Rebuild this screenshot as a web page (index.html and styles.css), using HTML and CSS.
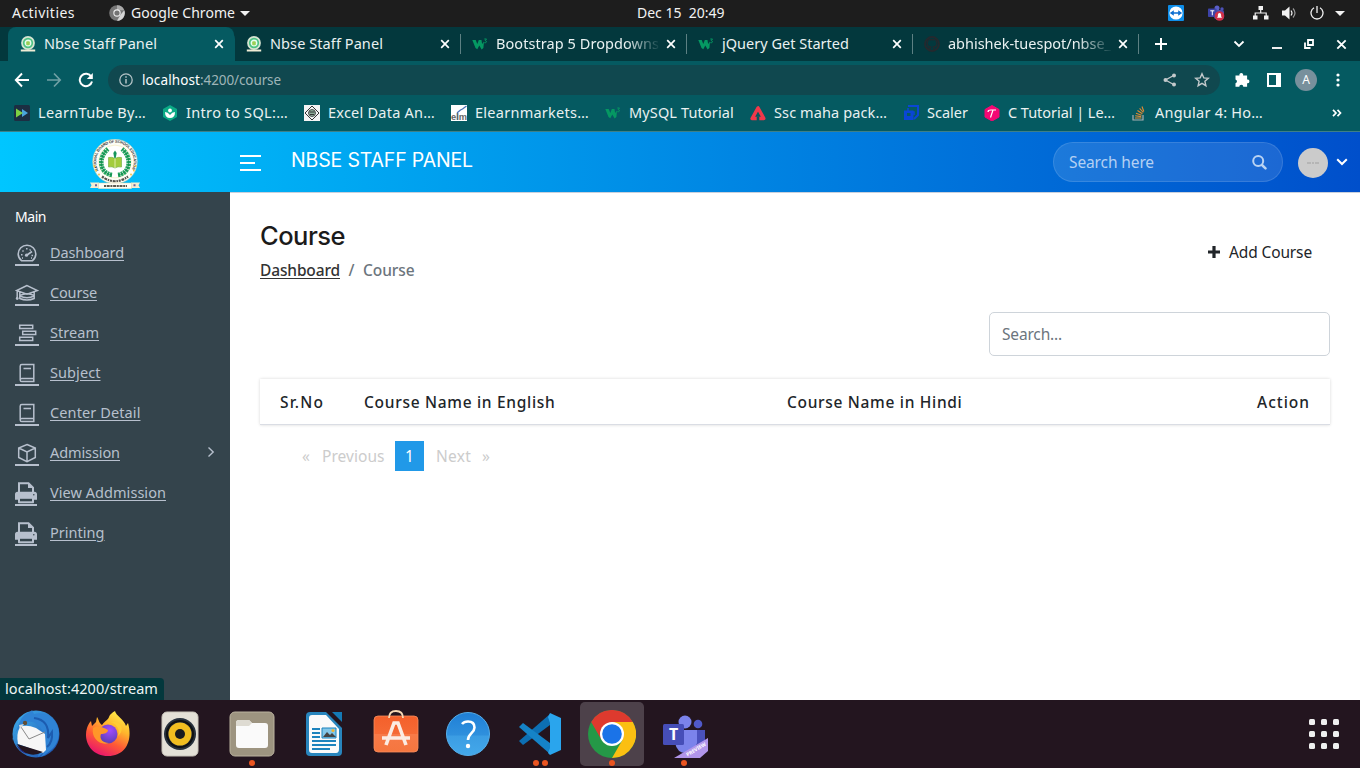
FILE: index.html
```html
<!DOCTYPE html>
<html lang="en">
<head>
<meta charset="utf-8">
<title>Nbse Staff Panel</title>
<link rel="stylesheet" href="styles.css">
</head>
<body>
<svg class="defs" width="0" height="0" aria-hidden="true">
  <defs>
    <linearGradient id="gBlue" x1="0" y1="0" x2="1" y2="1"><stop offset="0" stop-color="#3fb0ee"/><stop offset="1" stop-color="#1b4aa8"/></linearGradient>
    <linearGradient id="gFox" x1=".8" y1="0" x2=".3" y2="1"><stop offset="0" stop-color="#fff24d"/><stop offset=".35" stop-color="#ffb62c"/><stop offset=".65" stop-color="#ff5a35"/><stop offset="1" stop-color="#e8126f"/></linearGradient>
    <radialGradient id="gGlobe" cx=".6" cy=".3" r=".7"><stop offset="0" stop-color="#a24bff"/><stop offset="1" stop-color="#5b3fb5"/></radialGradient>
    <linearGradient id="gHelp" x1="0" y1="0" x2="0" y2="1"><stop offset="0" stop-color="#1f7fd6"/><stop offset=".53" stop-color="#2f90dd"/><stop offset=".54" stop-color="#3b9de3"/><stop offset="1" stop-color="#44a8ea"/></linearGradient>
    <linearGradient id="gBag" x1="0" y1="0" x2="0" y2="1"><stop offset="0" stop-color="#f4602b"/><stop offset=".5" stop-color="#f56a35"/><stop offset=".51" stop-color="#f77a48"/><stop offset="1" stop-color="#f5763f"/></linearGradient>
    <symbol id="sealmini" viewBox="0 0 16 16">
      <circle cx="8" cy="7" r="6.900" fill="#d6e5d2"/><circle cx="8" cy="7" r="4.300" fill="#e6fff0" stroke="#4cc283" stroke-width="1.700"/><rect x="6.200" y="5.300" width="3.600" height="4" rx="1" fill="#9ccf56"/><path d="M.8 13.500h14.400v2H.8z" fill="#f0ecd5"/>
    </symbol>
    <symbol id="w3" viewBox="0 0 16 16">
      <path d="M.3 4h3.400l1.600 4 1.500-4h2.700l.6 4L12 5.500 11.400 12 9.600 13.500 7.300 9.500 5.300 13.300 3.500 12z" fill="#059862"/>
      <path d="M12.300 3h2.200L13.200 4.600c1.800 0 1.800 2.700-.9 2.100" fill="none" stroke="#059862" stroke-width="1"/>
    </symbol>
    <symbol id="x" viewBox="0 0 10 10"><path d="M1.200 1.200l7.600 7.600M8.800 1.200L1.200 8.800" stroke="#fff" stroke-width="1.700"/></symbol>
    <symbol id="book" viewBox="0 0 24 24"><path d="M5.200 19V5.200c0-1 .6-1.600 1.600-1.600h12v17h-12c-1 0-1.600-.8-1.600-1.600 0-1 .7-1.500 1.600-1.500h12M8.500 7.500h7.500" fill="none" stroke="#b7c0cd" stroke-width="1.500"/></symbol>
    <symbol id="printer" viewBox="0 0 22 24"><path d="M4 12V2.200h9.500l4.500 4.500V12" fill="none" stroke="#b7c0cd" stroke-width="2"/><path d="M13 2v5h5z" fill="#b7c0cd"/><path d="M2.500 10.800h17c1.500 0 2.500 1 2.500 2.500v5.500h-3v2.400c0 .7-.4 1-1 1H4c-.6 0-1-.3-1-1v-2.400H0v-5.500c0-1.500 1-2.500 2.500-2.500z" fill="#b7c0cd"/><path d="M5 17.800h12v2.500H5z" fill="#34444c"/><circle cx="18.800" cy="13.800" r=".8" fill="#34444c"/></symbol>
  </defs>
</svg>

<div class="desktop">
  <div class="topbar">
    <div class="topbar-left">
      <span data-w="63">Activities</span>
      <span class="app-menu">
        <svg width="16" height="16" viewBox="0 0 16 16"><circle cx="8" cy="8" r="7.800" fill="#777"/><path d="M8 .2a7.800 7.800 0 0 1 7.300 5H8z" fill="#aaa"/><path d="M15.300 5.200A7.800 7.800 0 0 1 8 15.800l3.500-6z" fill="#d5d5d5"/><circle cx="8" cy="8" r="3.700" fill="#eee"/><circle cx="8" cy="8" r="2.600" fill="#747474"/></svg>
        <span data-w="104">Google Chrome</span>
        <i class="caret"></i>
      </span>
    </div>
    <div class="clock" data-w="87">Dec 15  20:49</div>
    <div class="tray">
      <svg width="16" height="16" viewBox="0 0 16 16"><rect width="16" height="16" rx="1" fill="#0e8ee9"/><circle cx="8" cy="8" r="6.600" fill="#fff"/><path d="M1.800 8l4-2.800v2h4.400v-2l4 2.800-4 2.800v-2H5.800v2z" fill="#0e6fd0"/></svg>
      <svg class="tray-teams" width="17" height="16" viewBox="0 0 17 16"><circle cx="9" cy="3" r="2.500" fill="#5a5fc9"/><circle cx="14" cy="4" r="1.700" fill="#4d52b8"/><rect x="6" y="5" width="10" height="9" rx="2" fill="#4a4fae"/><rect y="3.500" width="8.500" height="8.500" rx=".8" fill="#3d43a8"/><path d="M2.300 5.800h4M4.300 5.800v4.500" stroke="#fff" stroke-width="1"/><circle cx="11.500" cy="11" r="4.800" fill="#cf3049"/><path d="M9 12.800h5l-.8-1.200c0-3-.5-3.600-1.700-3.600s-1.700.6-1.700 3.600zM10.800 13.500h1.500" fill="#fff"/></svg>
      <svg class="tray-net" width="16" height="14" viewBox="0 0 16 14"><path d="M5.500 0h4.500v4H5.500zM0 9.500h4.500V13.500H0zM11 9.500h4.500V13.500H11z" fill="#f2f2f2"/><path d="M7.700 4v3M2.200 10V7h11v3" fill="none" stroke="#f2f2f2" stroke-width="1.200"/></svg>
      <svg class="tray-vol" width="15" height="14" viewBox="0 0 15 14"><path d="M0 4.500h3L7.500.5v13L3 9.500H0z" fill="#f2f2f2"/><path d="M9 4.500q2 2.500 0 5" fill="none" stroke="#f2f2f2" stroke-width="1.200"/><path d="M11 2.500q4 4.500 0 9" fill="none" stroke="#999" stroke-width="1.200"/></svg>
      <svg class="tray-pow" width="14" height="14" viewBox="0 0 14 14"><path d="M4 1.800a6 6 0 1 0 6 0M7 0v7" fill="none" stroke="#f2f2f2" stroke-width="1.300"/></svg>
      <i class="caret"></i>
    </div>
  </div>

  <div class="tabs">
    <div class="tab tab-active"><svg width="16" height="16"><use href="#sealmini"/></svg><div class="tab-title"><span data-w="113">Nbse Staff Panel</span></div><svg width="10" height="10"><use href="#x"/></svg></div>
    <div class="tab"><svg width="16" height="16"><use href="#sealmini"/></svg><div class="tab-title"><span data-w="113">Nbse Staff Panel</span></div><svg width="10" height="10"><use href="#x"/></svg></div>
    <div class="tab tab-sep"><svg width="16" height="16"><use href="#w3"/></svg><div class="tab-title fade"><span data-w="163">Bootstrap 5 Dropdowns</span></div><svg width="10" height="10"><use href="#x"/></svg></div>
    <div class="tab tab-sep"><svg width="16" height="16"><use href="#w3"/></svg><div class="tab-title"><span data-w="127">jQuery Get Started</span></div><svg width="10" height="10"><use href="#x"/></svg></div>
    <div class="tab tab-sep"><svg width="16" height="16" viewBox="0 0 16 16"><path d="M6 15.300c0-1 0-1.800-.1-2.200-2 .4-2.500-1-2.800-1.600M10 15.300v-2.700c0-.8-.2-1.200-.5-1.500 4.500-.5 3.700-5 2.500-6.200.2-.7.200-1.300-.1-2-1 0-1.700.8-2 .9-1.200-.3-2.600-.3-3.800 0-.4-.2-1-.9-2-.9-.3.700-.3 1.300-.1 2-1.200 1.200-2 5.700 2.500 6.200-.3.300-.5.700-.5 1.500" fill="none" stroke="#24292e" stroke-width="1.300"/><circle cx="8" cy="8" r="7" fill="none" stroke="#24292e" stroke-width="1.800"/></svg><div class="tab-title fade"><span data-w="163">abhishek-tuespot/nbse_</span></div><svg width="10" height="10"><use href="#x"/></svg></div>
    <div class="tab-tools">
      <svg width="14" height="14" viewBox="0 0 14 14"><path d="M7 1v12M1 7h12" stroke="#fff" stroke-width="2"/></svg>
      <svg class="win-chev" width="12" height="8" viewBox="0 0 12 8"><path d="M1.500 1.500L6 6l4.500-4.500" fill="none" stroke="#fff" stroke-width="1.800"/></svg>
      <svg class="win-min" width="10" height="10" viewBox="0 0 10 10"><path d="M0 9h10" stroke="#eee" stroke-width="2"/></svg>
      <svg class="win-max" width="10" height="10" viewBox="0 0 10 10"><path d="M4 1h5v5H4zM1 3.500V9h5.500" fill="none" stroke="#fff" stroke-width="1.800"/></svg>
      <svg class="win-close" width="11" height="11"><use href="#x"/></svg>
    </div>
  </div>

  <div class="toolbar">
    <svg width="16" height="16" viewBox="0 0 16 16"><path d="M15 8H2M8 1.500L1.800 8 8 14.500" fill="none" stroke="#fff" stroke-width="1.900"/></svg>
    <svg width="16" height="16" viewBox="0 0 16 16"><path d="M1 8h13M8 1.500L14.200 8 8 14.500" fill="none" stroke="#6fa0a4" stroke-width="1.700"/></svg>
    <svg width="16" height="16" viewBox="0 0 16 16"><path d="M13.300 4.800A6.200 6.200 0 1 0 14 9.500" fill="none" stroke="#fff" stroke-width="2"/><path d="M14.800 1v6H8.800z" fill="#fff"/></svg>
    <div class="omnibox">
      <svg width="14" height="14" viewBox="0 0 14 14"><circle cx="7" cy="7" r="6.200" fill="none" stroke="#b3c3c6" stroke-width="1.300"/><path d="M7 6v4.500M7 3.300v1.500" stroke="#b3c3c6" stroke-width="1.500"/></svg>
      <div class="url"><b data-w="58">localhost</b><span data-w="81">:4200/course</span></div>
      <svg class="share" width="14" height="14" viewBox="0 0 14 14"><path d="M11.500 2L2.500 7l9 5" fill="none" stroke="#c3c9cb" stroke-width="1.300"/><circle cx="11" cy="2.400" r="2" fill="#c3c9cb"/><circle cx="2.500" cy="7" r="2" fill="#c3c9cb"/><circle cx="11" cy="11.600" r="2" fill="#c3c9cb"/></svg>
      <svg width="16" height="16" viewBox="0 0 16 16"><path d="M8 1.800l1.800 4.100 4.500.4-3.400 3 1 4.400L8 11.400l-3.900 2.300 1-4.400-3.400-3 4.500-.4z" fill="none" stroke="#c3c9cb" stroke-width="1.400"/></svg>
    </div>
    <svg class="ext" width="16" height="16" viewBox="0 0 16 16"><path d="M1.500 3.500h4a1.900 1.900 0 1 1 3.600 0h4v4a1.900 1.900 0 1 1 0 3.700v3.600H9.300a2 2 0 0 0-4 0H1.500V11.200a1.900 1.900 0 0 0 0-3.700z" fill="#fff"/></svg>
    <svg class="panel" width="14" height="14" viewBox="0 0 14 14"><path d="M1 1h12v12H1z" fill="none" stroke="#fff" stroke-width="2"/><path d="M9 1h4v12H9z" fill="#fff"/></svg>
    <div class="profile">A</div>
    <svg class="dots" width="4" height="14" viewBox="0 0 4 14"><circle cx="2" cy="2" r="1.600" fill="#fff"/><circle cx="2" cy="7" r="1.600" fill="#fff"/><circle cx="2" cy="12" r="1.600" fill="#fff"/></svg>
  </div>

  <div class="bookmarks">
    <span class="bm"><svg width="16" height="16" viewBox="0 0 16 16"><rect width="16" height="16" rx="1.500" fill="#1c2e42"/><path d="M8 4l6 4-6 4z" fill="#4aa3dc"/><path d="M2 3.500L9 8l-7 4.500z" fill="#7ed043"/></svg><span data-w="108">LearnTube By…</span></span>
    <span class="bm"><svg width="16" height="16" viewBox="0 0 16 16"><path d="M8 0l7 4v8l-7 4-7-4V4z" fill="#0cab86"/><path d="M3 7q3 0 5 3 2-3 5-3 0 6-5 6T3 7z" fill="#fff"/><circle cx="8" cy="5.500" r="1.900" fill="#fff"/></svg><span data-w="102">Intro to SQL:…</span></span>
    <span class="bm"><svg width="16" height="16" viewBox="0 0 16 16"><path fill="#f4f4f4" d="M0 0h16v16H0z"/><path d="M8 1l7 7-7 7-7-7z" fill="none" stroke="#333"/><circle cx="8" cy="8" r="3.500" fill="#8fae9a" stroke="#333" stroke-width=".8"/><path d="M5.500 7h5M6 9.500h4" stroke="#333"/></svg><span data-w="107">Excel Data An…</span></span>
    <span class="bm"><svg width="16" height="16" viewBox="0 0 16 16"><path fill="#fff" d="M0 0h16v16H0z"/><path d="M6.500 15V7M6.500 7.500l3-2.500 2-1 4-3" stroke="#4a72b8" stroke-width="1.300" fill="none"/><text x="0" y="15" class="elm" textLength="16" lengthAdjust="spacingAndGlyphs">elm</text></svg><span data-w="114">Elearnmarkets…</span></span>
    <span class="bm"><svg width="16" height="16"><use href="#w3"/></svg><span data-w="105">MySQL Tutorial</span></span>
    <span class="bm"><svg width="16" height="16" viewBox="0 0 16 16"><path d="M8 3L2.200 13.500h11.600z" fill="none" stroke="#f2384a" stroke-width="3.600" stroke-linejoin="round"/><path d="M6.700 11.500h2.600v4.500H6.700z" fill="#055a61"/></svg><span data-w="113">Ssc maha pack…</span></span>
    <span class="bm"><svg width="16" height="16" viewBox="0 0 16 16"><path d="M5 1h10v9l-4 4" fill="none" stroke="#0a46d6" stroke-width="2"/><path d="M1 5.500h9.500V15H1z" fill="#0a46d6"/><path d="M5 3v4h6v3" fill="none" stroke="#0a46d6" stroke-width="1.500"/><path d="M4 8h3.500v3H4z" fill="#075b62"/></svg><span data-w="41">Scaler</span></span>
    <span class="bm"><svg width="16" height="16" viewBox="0 0 16 16"><path d="M8 .5l7 4v7.500l-7 4-7-4V4.500z" fill="#f40874" stroke="#f40874" stroke-linejoin="round"/><path d="M4 7q0-2 3-2h5M9 5Q8 8 6.500 12.500" fill="none" stroke="#fff" stroke-width="1.200"/></svg><span data-w="107">C Tutorial | Le…</span></span>
    <span class="bm"><svg width="16" height="16" viewBox="0 0 16 16"><path d="M2 10v5h10v-5" fill="none" stroke="#a9b0b3" stroke-width="1.200"/><path d="M4 13h6.500M4.200 10.800l6 .8M5 8.200l5.600 2M6.500 5.500l4.900 3.200M8.600 3.300l3.700 4.200M11 1.500l1.800 5" stroke="#e08a34" stroke-width="1.100"/></svg><span data-w="108">Angular 4: Ho…</span></span>
    <svg class="more" width="10" height="8" viewBox="0 0 10 8"><path d="M1 .8L4 4 1 7.200M5.500.8l3 3.200-3 3.200" fill="none" stroke="#fff" stroke-width="1.700"/></svg>
  </div>

  <div class="page">
    <header class="header">
      <div class="brand"><svg width="50" height="50" viewBox="0 0 50 50">
        <circle cx="25" cy="22.500" r="22.300" fill="#fdfdf6" stroke="#b9cfae" stroke-width=".6"/>
        <path id="ringTop" d="M8.500 31.500A18.800 18.800 0 1 1 41.500 31.500" fill="none"/>
        <text class="ring-text"><textPath href="#ringTop" textLength="76">NATIONAL BOARD OF SCHOOL EDUCATION</textPath></text>
        <path d="M12 37.500Q25 47 38 37.500" fill="none" stroke="#55534c" stroke-width="2.200" stroke-dasharray="2 .8 3 .8 1.500 .8"/>
        <circle cx="25" cy="22.500" r="16.400" fill="#fff" stroke="#efe3a4" stroke-width=".5"/>
        <path d="M22 36C9 34 8 18 18 10M28 36c13-2 14-18 4-26" fill="none" stroke="#20a45e" stroke-width="4.600" stroke-dasharray="2.200 .7"/>
        <path d="M22 36C9 34 8 18 18 10M28 36c13-2 14-18 4-26" fill="none" stroke="#128047" stroke-width=".8"/>
        <path d="M18.500 18.500q3.500-.8 6.500 1 3-1.800 6.500-1V28q-3.500-.8-6.500 1-3-1.800-6.500-1z" fill="#a3cc3c" stroke="#6cab3a" stroke-width=".6"/>
        <path d="M25 19.500V29" stroke="#eef5c8" stroke-width=".8"/>
        <path d="M25 11.500l1.700 2.500-1 5h-1.400l-1-5z" fill="#16955a"/>
        <g fill="#f2bd3a"><circle cx="4.500" cy="27" r=".9"/><circle cx="6.200" cy="31.500" r=".9"/><circle cx="9" cy="35.500" r=".9"/><circle cx="45.500" cy="27" r=".9"/><circle cx="43.800" cy="31.500" r=".9"/><circle cx="41" cy="35.500" r=".9"/></g>
        <path d="M0 43.500h9v5.500H0l1.500-2.700zM50 43.500h-9v5.500h9l-1.500-2.700z" fill="#f3ecd0"/>
        <path d="M8.500 44h33v5.700h-33z" fill="#fffef6" stroke="#d8cf9f" stroke-width=".5"/>
        <path d="M14 47h23" stroke="#5c5a50" stroke-width="1.900" stroke-dasharray="2 .7 3 .7"/>
        <path d="M5 46.200h2M43.500 46.200h2" stroke="#6b62a0" stroke-width="2"/>
      </svg></div>
      <div class="burger"><i></i><i></i><i></i></div>
      <h1 class="site-name"><span data-w="182">NBSE STAFF PANEL</span></h1>
      <div class="head-search"><span data-w="85">Search here</span><svg width="16" height="16" viewBox="0 0 16 16"><circle cx="7.200" cy="7" r="5" fill="none" stroke="#b9d3f3" stroke-width="2"/><path d="M11 11l3.500 3.300" stroke="#b9d3f3" stroke-width="2.500" stroke-linecap="round"/></svg></div>
      <div class="avatar"><i></i></div>
      <svg width="12" height="8" viewBox="0 0 12 8"><path d="M1.200 1.200L6 6l4.800-4.800" fill="none" stroke="#fff" stroke-width="2"/></svg>
    </header>
    <div class="body">
      <nav class="sidebar">
        <div class="menu-title"><span data-w="31">Main</span></div>
        <a class="item"><span class="ico"><svg width="24" height="24" viewBox="0 0 24 24"><path d="M6.500 19.700C4 17.500 3.200 15.300 3.200 13a8.800 8.800 0 0 1 17.600 0c0 2.300-.8 4.500-3.300 6.700z" fill="none" stroke="#b7c0cd" stroke-width="1.600"/><path d="M12 14l5-3.500" stroke="#b7c0cd" stroke-width="1.700"/><circle cx="11.500" cy="14.200" r="1.600" fill="#b7c0cd"/><path d="M6 13.700h1.500M16.500 14.500H18M7.500 9.500l1 1M11.800 7v1.500M15.500 8.500l-.7 1M7 17h1M16 17h1" stroke="#b7c0cd" stroke-width="1.500"/></svg></span><span class="label" data-w="74">Dashboard</span></a>
        <a class="item"><span class="ico"><svg width="24" height="24" viewBox="0 0 24 24"><path d="M12 4.500L1.500 9.500 12 13.200l10.500-3.700zM4.800 11v6.500q7.200 3 14.400 0V11M4.800 14.500q7.200-3.300 14.400 0M4.800 15q7.200 3.500 14.400 0M2.200 10v7" fill="none" stroke="#b7c0cd" stroke-width="1.500"/><circle cx="2.200" cy="17.500" r="1.400" fill="#b7c0cd"/></svg></span><span class="label" data-w="47">Course</span></a>
        <a class="item"><span class="ico"><svg width="24" height="24" viewBox="0 0 24 24"><path d="M4.700 4.200h13v3.300h-13zM7.700 10.300h13v3.300h-13zM4.700 16.300h13v3.300h-13z" fill="none" stroke="#b7c0cd" stroke-width="1.500"/></svg></span><span class="label" data-w="49">Stream</span></a>
        <a class="item"><span class="ico"><svg width="24" height="24"><use href="#book"/></svg></span><span class="label" data-w="50.500">Subject</span></a>
        <a class="item"><span class="ico"><svg width="24" height="24"><use href="#book"/></svg></span><span class="label" data-w="90.500">Center Detail</span></a>
        <a class="item"><span class="ico"><svg width="24" height="24" viewBox="0 0 24 24"><path d="M12 3.500L20.300 7v9.500L12 20.700 3.700 16.500V7zM3.700 7L12 11l8.300-4M12 11v9.500" fill="none" stroke="#b7c0cd" stroke-width="1.500"/></svg></span><span class="label" data-w="70">Admission</span><svg class="arrow" width="8" height="12" viewBox="0 0 8 12"><path d="M1.500 1.500L6.200 6l-4.700 4.500" fill="none" stroke="#b7c0cd" stroke-width="1.400"/></svg></a>
        <a class="item"><span class="ico ico-print"><svg width="22" height="24"><use href="#printer"/></svg></span><span class="label" data-w="116">View Addmission</span></a>
        <a class="item"><span class="ico ico-print"><svg width="22" height="24"><use href="#printer"/></svg></span><span class="label" data-w="54.500">Printing</span></a>
      </nav>
      <main class="content">
        <div class="page-head">
          <div>
            <h2 class="page-title"><span data-w="85">Course</span></h2>
            <div class="crumbs"><a data-w="80">Dashboard</a><span class="slash">/</span><span data-w="51.500">Course</span></div>
          </div>
          <div class="add"><svg width="14" height="14" viewBox="0 0 14 14"><path d="M7 1v12M1 7h12" stroke="#212529" stroke-width="3.200"/></svg><span data-w="83">Add Course</span></div>
        </div>
        <div class="search-row"><div class="search"><span data-w="60">Search...</span></div></div>
        <div class="table-head">
          <span data-w="44">Sr.No</span><span data-w="191.500">Course Name in English</span><span data-w="175.500">Course Name in Hindi</span><span data-w="53">Action</span>
        </div>
        <div class="pager"><span data-w="8">«</span><span class="prev" data-w="62.500">Previous</span><b>1</b><span data-w="35">Next</span><span class="last" data-w="8">»</span></div>
      </main>
    </div>
    <div class="status"><span data-w="153">localhost:4200/stream</span></div>
  </div>

  <div class="dock">
    <div class="app"><svg width="48" height="48" viewBox="0 0 48 48"><circle cx="24" cy="24" r="23.500" fill="url(#gBlue)"/><path d="M9 9C14 2 18 3 20 0l2 4c12-3 23 4 25 18 0 12-6 18-18 25l4-6-7 6 2-8c6-8 5-20-5-26-6-3-12 0-14 4-6 4-8 10-10 16z" fill="#2f83d5"/><path d="M22 8q16 2 14 20l4-6q1 10-5 15" fill="none" stroke="#1c5cb0" stroke-width="2"/><path d="M8 17q6-3 16 1l9 6 1 16-3 3L6 34q-2-10 2-17z" fill="#f6f6f6"/><path d="M9 17l8 12 16-7" fill="none" stroke="#888" stroke-width="1"/><path d="M5 34l26 8q-8 4-14 2-7-1-12-10z" fill="#23151f"/><path d="M4 34q6 8 12 10-8-1-12-10z" fill="#29176f"/><circle cx="13" cy="13" r="2.200" fill="#634e35"/><path d="M12 14l-4 5-1-4z" fill="#ddd"/></svg></div>
    <div class="app"><svg width="48" height="48" viewBox="0 0 48 48"><path d="M31 1c1 5 9 8 11 15l2-3c5 17-2 33-20 33C7 46-1 31 3 18c1-3 2-5 4-7l1 5 4-4 1-5c2 3 2 6 5 8 4-5 6-5 7-8 1-3 3-4 6-6z" fill="url(#gFox)"/><circle cx="24" cy="24" r="9.500" fill="url(#gGlobe)"/><path d="M9 18c5-3 9-1 15 2 0 3-4 4-7 4-2 5 2 9 8 9-9 3-18-5-16-15z" fill="#ff9629"/><path d="M27 12c7 3 9 8 7 14 7-6 4-15-7-14z" fill="#ffcf35" opacity=".8"/></svg></div>
    <div class="app"><svg width="48" height="48" viewBox="0 0 48 48"><rect x="6" y="2" width="36" height="44" rx="5" fill="#e4e0d7" stroke="#c9c4ba"/><circle cx="24" cy="24" r="16" fill="#27303c"/><circle cx="24" cy="24" r="13" fill="none" stroke="#101114" stroke-width="2"/><circle cx="24" cy="24" r="11.500" fill="#f1bd20"/><circle cx="24" cy="24" r="5" fill="#191b1f"/></svg></div>
    <div class="app"><svg width="48" height="48" viewBox="0 0 48 48"><rect x="2" y="2" width="44" height="44" rx="5" fill="#9d9480" stroke="#bbb39f"/><path d="M8 13q0-3 3-3h10l3 3h13q3 0 3 3v19q0 3-3 3H11q-3 0-3-3z" fill="#fafafa"/><path d="M8 16v-3q0-3 3-3h10l3 3-3 3z" fill="#dedbd2"/></svg><i class="run"></i></div>
    <div class="app"><svg width="48" height="48" viewBox="0 0 48 48"><path d="M10 2h16l16 16v24q0 4-4 4H10q-4 0-4-4V6q0-4 4-4z" fill="#2885bd"/><path d="M32 2h10v10z" fill="#1579b4"/><path d="M12 5h14l13 14v20q0 4-3 4H12q-3 0-3-3V8q0-3 3-3z" fill="#fafafa"/><path d="M12 19h8M12 23h8M12 27h8M12 31h24M12 35h24M12 39h18" stroke="#1d83bd" stroke-width="2"/><path d="M22 18h14v10H22z" fill="#83c7e9" stroke="#1d83bd"/><path d="M23 27l4-5 3 3 2-2 4 4z" fill="#444"/><circle cx="33" cy="20.500" r="1.500" fill="#f2b430"/></svg></div>
    <div class="app"><svg width="48" height="48" viewBox="0 0 48 48"><rect x="2" y="6" width="44" height="36" rx="4" fill="url(#gBag)" stroke="#f88e5e" stroke-width=".8"/><path d="M17 8q0-7 7-7t7 7" fill="none" stroke="#f6d9b5" stroke-width="1.800"/><path d="M14 35l8-22h4l8 22M10 28h28" fill="none" stroke="#fbece3" stroke-width="3.600"/></svg></div>
    <div class="app"><svg width="48" height="48" viewBox="0 0 48 48"><circle cx="24" cy="24" r="21.500" fill="url(#gHelp)" stroke="#55aeea"/><path d="M18 14q2-2.500 6-2.500 6.500 0 6.500 6c0 5.500-6.500 6-6.500 12.500" fill="none" stroke="#fff" stroke-width="2.600"/><circle cx="24" cy="36" r="2.200" fill="#fff"/></svg></div>
    <div class="app"><svg width="48" height="48" viewBox="0 0 48 48"><path d="M3 31l4 4 27-20V4z" fill="#0d6fb3"/><path d="M3 17l4-4 27 20V44z" fill="#1583c7"/><path d="M34 3l11 5v32l-11 5-2-2 2-5V13l-2-6z" fill="#2aa5ed"/></svg><i class="run"></i><i class="run"></i></div>
    <div class="app app-on"><svg width="48" height="48" viewBox="0 0 48 48"><circle cx="24" cy="24" r="24" fill="#259847"/><path d="M3.200 12A24 24 0 0 1 44.800 12H24L13.600 30z" fill="#de3a2e"/><path d="M44.800 12A24 24 0 0 1 24 48l10.400-18L24 12z" fill="#fbbf12"/><circle cx="24" cy="24" r="12" fill="#fff"/><circle cx="24" cy="24" r="9.800" fill="#1a73e8"/></svg><i class="run"></i></div>
    <div class="app"><svg width="48" height="48" viewBox="0 0 48 48"><circle cx="25" cy="12" r="6.500" fill="#7b83eb"/><circle cx="38" cy="14" r="4.300" fill="#5059c9"/><path d="M34 20h11v18h-8z" fill="#4a51bd"/><path d="M15 20h22v13q-2 10-11 10t-11-10z" fill="#7b83eb"/><rect x="3" y="14" width="21" height="21" rx="1.500" fill="#464eb8"/><text x="9" y="30" class="teams-t">T</text><path d="M14 48l34-20v13l-8 7z" fill="#b195ea"/><text class="preview" transform="translate(27.500 46.500) rotate(-31)" textLength="22">PREVIEW</text></svg><i class="run"></i></div>
    <div class="grid"><i></i><i></i><i></i><i></i><i></i><i></i><i></i><i></i><i></i></div>
  </div>
</div>
<script src="fit.js"></script>
</body>
</html>
```

FILE: styles.css
```css
* { box-sizing: border-box; }
body { margin: 0; font-family: "Noto Sans", "Open Sans", sans-serif; font-size: 14.5px; }
svg { display: block; flex: none; }
.defs { position: absolute; }
[data-w] { display: inline-block; white-space: pre; flex: none; }
.desktop { width: 1360px; height: 768px; display: flex; flex-direction: column; overflow: hidden; }

/* system bar */
.topbar { height: 27px; flex: none; background: #1d1d1d; color: #f2f2f2; display: grid; grid-template-columns: 637px 87px 1fr; align-items: center; font-size: 14px; line-height: 26px; padding-bottom: 1px; }
.topbar-left { display: flex; padding-left: 12px; gap: 34px; }
.app-menu { display: flex; align-items: center; }
.app-menu svg { margin-right: 6px; }
.caret { border: 5px solid transparent; border-top-color: #f2f2f2; border-bottom: 0; }
.app-menu .caret { margin-left: 5px; }
.tray { display: flex; align-items: center; padding-left: 444px; }
.tray-teams { margin-left: 24px; }
.tray-net { margin-left: 28px; }
.tray-vol { margin-left: 13px; }
.tray-pow { margin-left: 13px; }
.tray .caret { margin-left: 11px; }

/* browser chrome */
.tabs { height: 34px; flex: none; display: flex; background: #03383d; color: #e9f1f1; padding-left: 8px; }
.tab { width: 226px; display: flex; align-items: center; padding: 0 10px 0 12px; position: relative; }
.tab-active { background: #055a61; border-radius: 8px 8px 0 0; box-shadow: 1px 4px 0 #055a61; }
.tab-sep::before { content: ""; position: absolute; left: 0; top: 7px; width: 1px; height: 20px; background: #5d8083; }
.tab-title { width: 164px; margin: 0 7px 0 8px; line-height: 32px; height: 34px; }
.fade { -webkit-mask-image: linear-gradient(to right, #000 130px, transparent 165px); mask-image: linear-gradient(to right, #000 130px, transparent 165px); }
.tab-tools { flex: 1; display: flex; align-items: center; padding-left: 16px; position: relative; }
.tab-tools::before { content: ""; position: absolute; left: 0; top: 7px; width: 1px; height: 20px; background: #5d8083; }
.win-chev { margin-left: 65px; }
.win-min { margin-left: 27px; }
.win-max { margin-left: 22px; }
.win-close { margin-left: 22px; }
.toolbar { height: 37px; flex: none; background: #055a61; display: flex; align-items: center; padding: 1px 0 0 14px; gap: 16px; }
.omnibox { width: 1112px; height: 30px; margin-left: -2px; border-radius: 15px; background: #10484f; display: flex; align-items: center; padding: 0 10px 0 11px; }
.url { flex: 1; margin-left: 9px; color: #9fb5b8; font-size: 13.500px; line-height: 28px; display: flex; }
.url b { font-weight: 400; color: #fff; }
.share { margin-right: 17px; }
.ext { margin-left: -2px; }
.panel { margin-left: 1px; }
.profile { width: 22px; height: 22px; margin-left: -2px; border-radius: 50%; background: #78909c; color: #fff; font-size: 12px; line-height: 22px; text-align: center; }
.dots { margin-left: 3px; }
.bookmarks { height: 33px; flex: none; background: #055a61; color: #e9f1f1; display: flex; align-items: center; gap: 16px; padding: 0 18px 3px 14px; line-height: 28px; }
.bm { display: flex; align-items: center; gap: 8px; }
.bm > span { padding-bottom: 2px; }
.elm { font: bold 9px "Liberation Sans", sans-serif; fill: #666; }
.more { margin-left: auto; }

/* web page */
.page { height: 569px; flex: none; position: relative; border-top: 1px solid #3f7f86; background: #fff; color: #212529; }
.header { height: 60px; background: linear-gradient(to right, #00c6ff, #004fcb); display: flex; align-items: center; padding-right: 12px; }
.brand { width: 230px; display: flex; justify-content: center; padding-top: 4px; }
.ring-text { font: bold 3.800px "Liberation Sans", sans-serif; fill: #333; }
.burger { width: 21px; margin: 2px 0 0 10px; display: grid; gap: 5px; }
.burger i { height: 2px; background: #fff; }
.burger i:nth-child(2) { width: 15px; }
.site-name { margin: 0 0 0 30px; flex: 1; font: 400 19.500px/24px Inter, sans-serif; color: #fff; padding-bottom: 4px; }
.head-search { width: 230px; height: 40px; border-radius: 20px; border: 1px solid rgba(255,255,255,.12); background: rgba(255,255,255,.11); display: flex; justify-content: space-between; align-items: center; padding: 0 15px; color: #b4d0f3; font-size: 15.500px; }
.avatar { width: 30px; height: 30px; margin: 2px 8px 0 15px; border-radius: 50%; background: #cbcbcb; display: grid; place-items: center; }
.avatar i { width: 12px; height: 2px; background: linear-gradient(to right, #b5b5b5 4px, transparent 4px 5px, #b5b5b5 5px 7px, transparent 7px 8px, #b5b5b5 8px); }
.body { display: flex; height: 508px; }
.sidebar { width: 230px; background: #34444c; padding: 10px 15px; color: #b7c0cd; }
.menu-title { height: 30px; line-height: 29px; color: #fff; font-size: 14px; }
.item { height: 40px; display: flex; align-items: center; }
.ico { width: 24px; height: 28px; margin-right: 11px; border-bottom: 2px solid #b7c0cd; padding-top: 3px; }
.ico svg { margin-bottom: -1px; }
.ico-print { width: 22px; margin-right: 13px; }
.label { text-decoration: underline; text-underline-offset: 2px; line-height: 40px; }
.arrow { margin-left: auto; }
.content { flex: 1; padding: 29px 30px 0; border-top: 1px solid #c9d0dc; }
.page-head { display: flex; justify-content: space-between; height: 90px; }
.page-title { margin: 0; font: 500 25.500px/28px Inter, sans-serif; color: #1b1b1b; }
.crumbs { margin-top: 8px; display: flex; font-weight: 500; font-size: 15.500px; line-height: 24px; color: #6c757d; }
.crumbs a { color: #333; text-decoration: underline; text-underline-offset: 2px; }
.slash { width: 23px; text-align: center; }
.add { display: flex; align-items: center; gap: 8px; height: 60px; margin-right: 18px; font-size: 15.500px; }
.search-row { display: flex; justify-content: flex-end; }
.search { width: 341px; height: 44px; border: 1px solid #ced4da; border-radius: 5px; padding: 0 12px; line-height: 42px; font-size: 15.500px; color: #6c757d; }
.table-head { height: 46px; margin-top: 23px; display: grid; grid-template-columns: 84px 423px 1fr auto; justify-items: start; padding: 0 20px; line-height: 46px; font-weight: 500; font-size: 15.500px; border-bottom: 1px solid #dadde4; box-shadow: 0 0 3px rgba(0,0,0,.16); }
.pager { display: flex; align-items: center; margin-top: 16px; padding-left: 42px; height: 30px; color: #ccc; font-size: 15.500px; line-height: 30px; }
.prev { margin-left: 12px; }
.pager b { width: 29px; margin: 0 12px 0 10.500px; background: #2199e8; color: #fff; font-weight: 400; text-align: center; }
.last { margin-left: 11px; }
.status { position: absolute; left: 0; bottom: 0; width: 164px; height: 22px; padding-left: 5px; border-radius: 0 4px 0 0; background: #03383d; color: #eef5f5; line-height: 21px; }

/* dock */
.dock { height: 68px; flex: none; background: #23151f; display: flex; align-items: center; gap: 8px; padding: 0 21px 0 4px; }
.app { width: 64px; height: 64px; border-radius: 5px; display: flex; flex-wrap: wrap; justify-content: center; align-content: flex-start; gap: 2px 3px; padding: 8px 6px 0; }
.app svg { margin: 0 2px; }
.app-on { background: #4d414a; }
.run { width: 6px; height: 6px; border-radius: 50%; background: #ea5420; }
.teams-t { font: bold 16px "Noto Sans", sans-serif; fill: #fff; }
.preview { font: bold 5px "Noto Sans", sans-serif; fill: #fff; }
.grid { margin-left: auto; display: grid; grid-template-columns: repeat(3, 6px); gap: 6px; }
.grid i { height: 6px; border-radius: 1.500px; background: #efefef; }
```

FILE: fit.js
```js
// Spreads each label's letters so that it fills its reserved width.
document.querySelectorAll('[data-w]').forEach(function (el) {
  var target = parseFloat(el.dataset.w);
  var natural = el.getBoundingClientRect().width;
  el.style.letterSpacing = (target - natural) / el.textContent.length + 'px';
  el.style.width = target + 'px';
});
```
